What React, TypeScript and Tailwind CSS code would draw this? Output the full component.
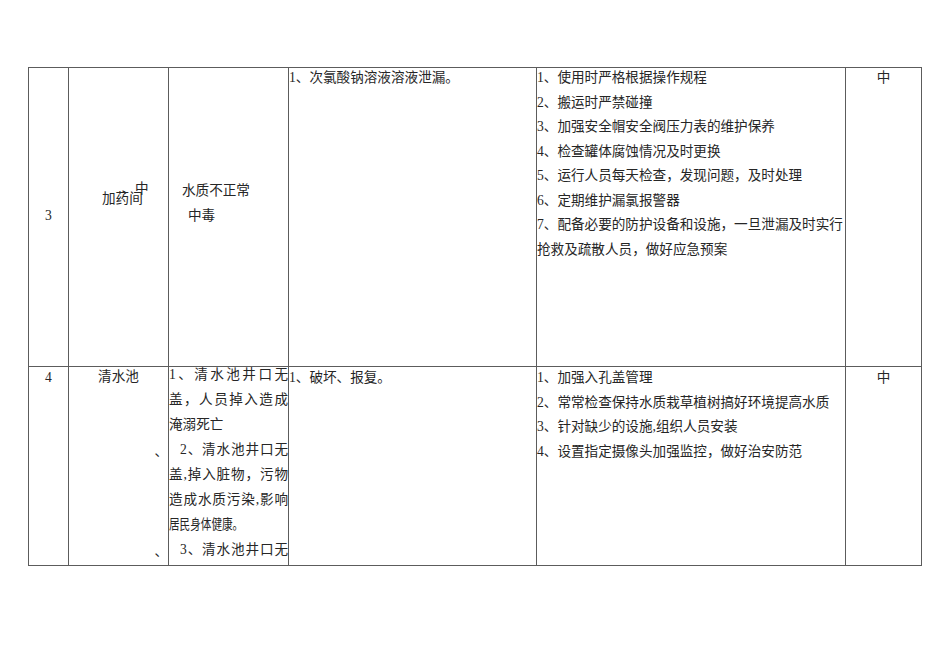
import React from "react";

const ROW3_MEASURES = [
  "1、使用时严格根据操作规程",
  "2、搬运时严禁碰撞",
  "3、加强安全帽安全阀压力表的维护保养",
  "4、检查罐体腐蚀情况及时更换",
  "5、运行人员每天检查，发现问题，及时处理",
  "6、定期维护漏氯报警器",
  "7、配备必要的防护设备和设施，一旦泄漏及时实行",
  "抢救及疏散人员，做好应急预案",
];

const ROW4_MEASURES = [
  "1、加强入孔盖管理",
  "2、常常检查保持水质栽草植树搞好环境提高水质",
  "3、针对缺少的设施,组织人员安装",
  "4、设置指定摄像头加强监控，做好治安防范",
];

// digits and ascii commas go in a serif face, like the Song-style original
function T({ s }: { s: string }) {
  return (
    <>
      {s.split(/([0-9,]+)/).map((p, i) =>
        /^[0-9,]+$/.test(p) ? (
          <span key={i} className="font-['Liberation_Serif',serif] leading-none">
            {p}
          </span>
        ) : (
          <React.Fragment key={i}>{p}</React.Fragment>
        )
      )}
    </>
  );
}

function Line({ s, tall, className = "" }: { s: string; tall?: boolean; className?: string }) {
  const h = tall ? "h-[25px] leading-[25px]" : "h-[24.5px] leading-[24.5px]";
  return (
    <div className={`${h} whitespace-nowrap ${className}`}>
      <T s={s} />
    </div>
  );
}

function Just({ s, className = "" }: { s: string; className?: string }) {
  return (
    <div className={`h-[25px] leading-[25px] text-justify [text-align-last:justify] ${className}`}>
      <T s={s} />
    </div>
  );
}

export default function App() {
  return (
    <div className="min-h-screen bg-white pt-[67px] pl-[28px] text-[13.6px] text-[#262626] font-['Noto_Sans_CJK_SC','Noto_Sans_CJK_JP',sans-serif]">
      <div className="grid w-[894px] grid-cols-[39px_99px_119px_247px_308px_75px] grid-rows-[298px_198px] gap-px bg-[#5c5c5c] p-px">
        {/* row 3 */}
        <div className="bg-white pt-[134px] text-center">
          <Line s="3" />
        </div>
        <div className="bg-white pt-[117px] pl-[33px]">
          <div className="relative w-fit h-[24.5px] leading-[24.5px] whitespace-nowrap">
            加药间
            <span className="absolute left-[19.5px] -top-[10px]">、中</span>
          </div>
        </div>
        <div className="bg-white pt-[109px] pl-[13px]">
          <Line s="水质不正常" tall />
          <Line s="中毒" tall className="pl-[6px]" />
        </div>
        <div className="bg-white">
          <div className="-mt-[4px]">
            <Line s="1、次氯酸钠溶液溶液泄漏。" />
          </div>
        </div>
        <div className="bg-white">
          <div className="-mt-[4px]">
            {ROW3_MEASURES.map((m) => (
              <Line key={m} s={m} />
            ))}
          </div>
        </div>
        <div className="bg-white text-center">
          <div className="-mt-[4px]">
            <Line s="中" />
          </div>
        </div>

        {/* row 4 */}
        <div className="bg-white text-center">
          <div className="-mt-[3px]">
            <Line s="4" />
          </div>
        </div>
        <div className="bg-white">
          <div className="-mt-[4px]">
            <Line s="清水池" tall className="text-center" />
            <Line s="" tall />
            <Line s="" tall />
            <Line s="、" tall className="text-right" />
            <Line s="" tall />
            <Line s="" tall />
            <Line s="" tall />
            <Line s="、" tall className="text-right" />
          </div>
        </div>
        <div className="bg-white">
          <div className="-mt-[6px]">
            <Just s="1、清水池井口无" />
            <Just s="盖，人员掉入造成" />
            <Line s="淹溺死亡" tall />
            <Just s="2、清水池井口无" className="pl-[11px]" />
            <Just s="盖,掉入脏物，污物" />
            <Just s="造成水质污染,影响" />
            <div className="h-[25px] leading-[25px] whitespace-nowrap">
              <span className="inline-block origin-left scale-x-[0.78]">居民身体健康。</span>
            </div>
            <Just s="3、清水池井口无" className="pl-[11px]" />
          </div>
        </div>
        <div className="bg-white">
          <div className="-mt-[3px]">
            <Line s="1、破坏、报复。" />
          </div>
        </div>
        <div className="bg-white">
          <div className="-mt-[3px]">
            {ROW4_MEASURES.map((m) => (
              <Line key={m} s={m} />
            ))}
          </div>
        </div>
        <div className="bg-white text-center">
          <div className="-mt-[3px]">
            <Line s="中" />
          </div>
        </div>
      </div>
    </div>
  );
}
